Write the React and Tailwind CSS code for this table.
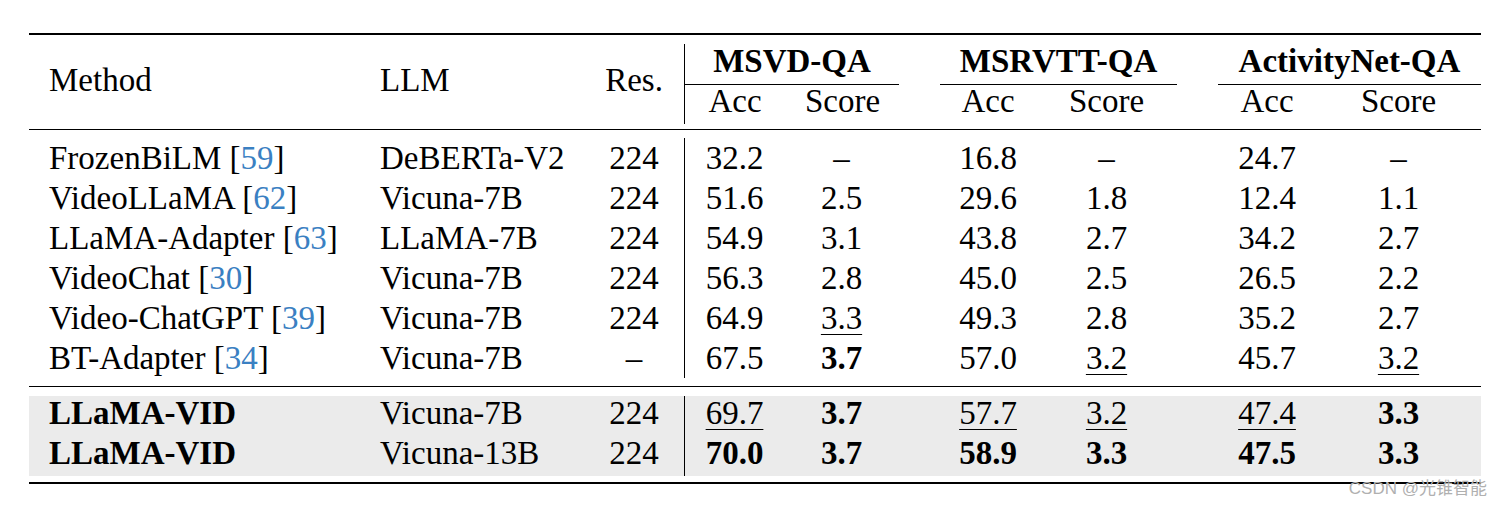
import React from "react";

const COLS =
  "grid grid-cols-[331px_224px_100px_100px_115px_41px_96px_141px_41px_98px_165px]";

const rows = [
  { m: "FrozenBiLM", c: "59", llm: "DeBERTa-V2", res: "224", v: ["32.2", "–", "16.8", "–", "24.7", "–"] },
  { m: "VideoLLaMA", c: "62", llm: "Vicuna-7B", res: "224", v: ["51.6", "2.5", "29.6", "1.8", "12.4", "1.1"] },
  { m: "LLaMA-Adapter", c: "63", llm: "LLaMA-7B", res: "224", v: ["54.9", "3.1", "43.8", "2.7", "34.2", "2.7"] },
  { m: "VideoChat", c: "30", llm: "Vicuna-7B", res: "224", v: ["56.3", "2.8", "45.0", "2.5", "26.5", "2.2"] },
  { m: "Video-ChatGPT", c: "39", llm: "Vicuna-7B", res: "224", v: ["64.9", "u:3.3", "49.3", "2.8", "35.2", "2.7"] },
  { m: "BT-Adapter", c: "34", llm: "Vicuna-7B", res: "–", v: ["67.5", "b:3.7", "57.0", "u:3.2", "45.7", "u:3.2"] },
];

const ours = [
  { m: "LLaMA-VID", llm: "Vicuna-7B", res: "224", v: ["u:69.7", "b:3.7", "u:57.7", "u:3.2", "u:47.4", "b:3.3"] },
  { m: "LLaMA-VID", llm: "Vicuna-13B", res: "224", v: ["b:70.0", "b:3.7", "b:58.9", "b:3.3", "b:47.5", "b:3.3"] },
];

function Val({ s }) {
  if (s.startsWith("b:")) return <span className="font-bold">{s.slice(2)}</span>;
  if (s.startsWith("u:"))
    return (
      <span className="underline decoration-1 underline-offset-[5px]">{s.slice(2)}</span>
    );
  return <span>{s}</span>;
}

function Row({ r, bold, tall }) {
  return (
    <div className={`${COLS} leading-[40px]`}>
      <div className={`pl-[20px] whitespace-nowrap ${bold ? "font-bold" : ""}`}>
        {r.m}
        {r.c && (
          <>
            {" "}[<span className="text-[#3a80c2]">{r.c}</span>]
          </>
        )}
      </div>
      <div className="pl-[20px] whitespace-nowrap">{r.llm}</div>
      <div className="text-center">{r.res}</div>
      <div className={`text-center border-l border-black ${tall ? "pb-[3px]" : ""}`}>
        <Val s={r.v[0]} />
      </div>
      <div className="text-center">
        <Val s={r.v[1]} />
      </div>
      <div />
      <div className="text-center">
        <Val s={r.v[2]} />
      </div>
      <div className="text-center">
        <Val s={r.v[3]} />
      </div>
      <div />
      <div className="text-center">
        <Val s={r.v[4]} />
      </div>
      <div className="text-center">
        <Val s={r.v[5]} />
      </div>
    </div>
  );
}

function Group({ title, w, first }) {
  return (
    <div className={`col-span-2 ${first ? "border-l border-black" : ""}`}>
      <div className="text-center font-bold leading-[34px] mb-[6px]">{title}</div>
      <div className={`grid ${w} border-t border-black leading-[32px] pb-[7px]`}>
        <div className="text-center">Acc</div>
        <div className="text-center">Score</div>
      </div>
    </div>
  );
}

export default function App() {
  return (
    <div
      className="relative w-[1502px] h-[506px] bg-white text-black overflow-hidden text-[33px]"
      style={{ fontFamily: '"Liberation Serif", "Times New Roman", serif' }}
    >
      <div className="ml-[29px] w-[1452px] mt-[33px] border-t-2 border-black">
        {/* Header */}
        <div className={`${COLS} pt-[9px] pb-[5px] border-b border-black`}>
          <div className="pl-[20px] pt-[16px] leading-[40px]">Method</div>
          <div className="pl-[20px] pt-[16px] leading-[40px]">LLM</div>
          <div className="text-center pt-[16px] leading-[40px]">Res.</div>
          <Group title="MSVD-QA" w="grid-cols-[100px_115px]" first />
          <div />
          <Group title="MSRVTT-QA" w="grid-cols-[96px_141px]" />
          <div />
          <Group title="ActivityNet-QA" w="grid-cols-[98px_165px]" />
        </div>

        {/* Body */}
        <div className="pt-[8px] pb-[8px] border-b border-black">
          {rows.map((r, i) => (
            <Row key={i} r={r} />
          ))}
        </div>

        {/* Ours */}
        <div className="mt-[9px] h-[80px] bg-[#ebebeb] flex flex-col overflow-hidden">
          <div className="-mt-[3px]">
            {ours.map((r, i) => (
              <Row key={i} r={r} bold tall={i === 1} />
            ))}
          </div>
        </div>

        <div className="mt-[6px] border-t-2 border-black" />
      </div>

      <div
        className="absolute right-[15px] top-[478px] text-[17px] leading-[22px] text-[#b0b0b0]"
        style={{ fontFamily: '"Liberation Sans", "Noto Sans CJK SC", sans-serif' }}
      >
        CSDN @光锥智能
      </div>
    </div>
  );
}
